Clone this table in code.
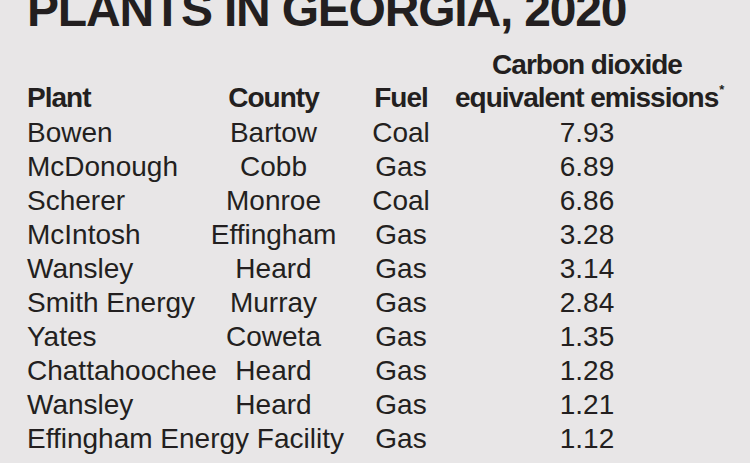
import React from 'react';

const rows = [
  ['Bowen', 'Bartow', 'Coal', '7.93'],
  ['McDonough', 'Cobb', 'Gas', '6.89'],
  ['Scherer', 'Monroe', 'Coal', '6.86'],
  ['McIntosh', 'Effingham', 'Gas', '3.28'],
  ['Wansley', 'Heard', 'Gas', '3.14'],
  ['Smith Energy', 'Murray', 'Gas', '2.84'],
  ['Yates', 'Coweta', 'Gas', '1.35'],
  ['Chattahoochee', 'Heard', 'Gas', '1.28'],
  ['Wansley', 'Heard', 'Gas', '1.21'],
  ['Effingham Energy Facility', '', 'Gas', '1.12'],
];

const cols = 'grid grid-cols-[173px_147px_108px_264px]';

export default function App() {
  return (
    <div className="w-[750px] h-[463px] overflow-hidden bg-[#e8e6e7] text-[#231f20] font-['Liberation_Sans',Arial,sans-serif] pl-[27px]">
      <h1 className="mt-[-14px] h-[48px] text-[48px] leading-[48px] font-bold tracking-[-1.2px] whitespace-nowrap">
        PLANTS IN GEORGIA, 2020
      </h1>

      <div className={`${cols} mt-[14px] items-end text-[28px] leading-[33px] font-bold tracking-[-1px]`}>
        <div>Plant</div>
        <div className="text-center">County</div>
        <div className="text-center">Fuel</div>
        <div className="text-center whitespace-nowrap">
          <div>Carbon dioxide</div>
          <div className="h-[33px]">
            equivalent emissions<span className="inline-block text-[13px] leading-[13px] align-top mt-[2px] ml-[1px]">*</span>
          </div>
        </div>
      </div>

      <div className="mt-[2px] text-[28px] leading-[34px]">
        {rows.map((r, i) => (
          <div key={i} className={cols}>
            <div className="whitespace-nowrap">{r[0]}</div>
            <div className="text-center">{r[1]}</div>
            <div className="text-center">{r[2]}</div>
            <div className="text-center">{r[3]}</div>
          </div>
        ))}
      </div>
    </div>
  );
}
